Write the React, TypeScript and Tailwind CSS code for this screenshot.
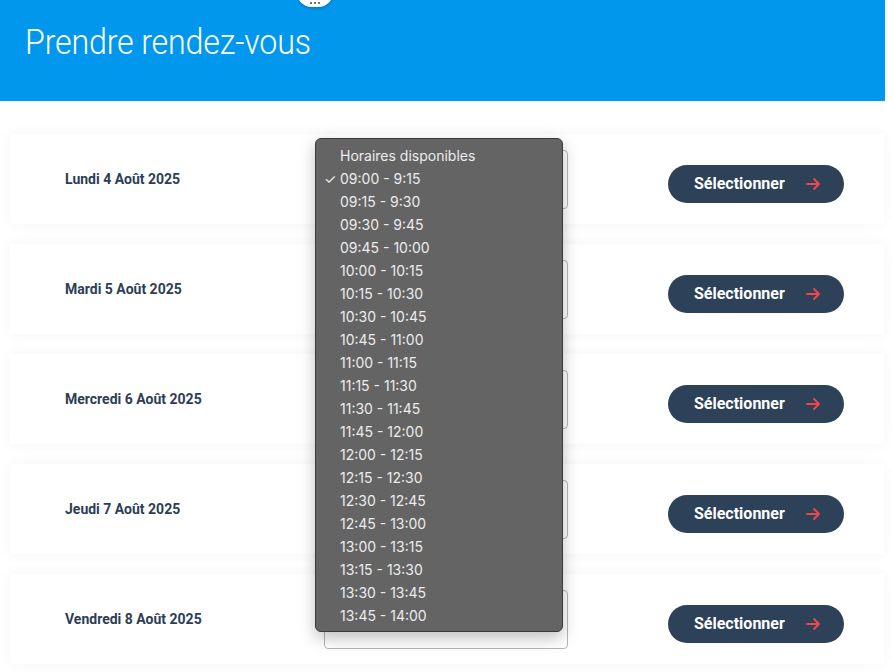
import React from 'react';

const dates = [
    'Lundi 4 Août 2025',
    'Mardi 5 Août 2025',
    'Mercredi 6 Août 2025',
    'Jeudi 7 Août 2025',
    'Vendredi 8 Août 2025',
];

const slots = [
    '09:00 - 9:15', '09:15 - 9:30', '09:30 - 9:45', '09:45 - 10:00',
    '10:00 - 10:15', '10:15 - 10:30', '10:30 - 10:45', '10:45 - 11:00',
    '11:00 - 11:15', '11:15 - 11:30', '11:30 - 11:45', '11:45 - 12:00',
    '12:00 - 12:15', '12:15 - 12:30', '12:30 - 12:45', '12:45 - 13:00',
    '13:00 - 13:15', '13:15 - 13:30', '13:30 - 13:45', '13:45 - 14:00',
];

const Arrow: React.FC = () => (
    <svg width="16" height="16" viewBox="0 0 16 16" fill="none" stroke="#f0474f" strokeWidth="1.8" strokeLinecap="round" strokeLinejoin="round">
        <path d="M2 8h12M9 3l5 5-5 5" />
    </svg>
);

export default function App() {
    return (
        <div className="relative w-[893px] h-[672px] bg-white overflow-hidden font-['Roboto',sans-serif]">
            <header className="relative h-[101px] w-[885px] bg-[#0097ec] pl-[25px] pt-[19px]">
                {/* little floating pill, cut at the top edge */}
                <div className="absolute left-[297px] top-[-22px] w-[36px] h-[29px] rounded-full bg-white shadow-[0_1px_3px_rgba(0,0,0,0.25)] flex items-end justify-center gap-[2px] pb-[3px]">
                    <span className="w-[2px] h-[2px] rounded-full bg-[#444]" />
                    <span className="w-[2px] h-[2px] rounded-full bg-[#444]" />
                    <span className="w-[2px] h-[2px] rounded-full bg-[#444]" />
                </div>
                <h1 className="inline-block origin-left scale-x-[0.92] text-white text-[35px] font-light leading-[48px] tracking-[-0.2px] whitespace-nowrap">Prendre rendez-vous</h1>
            </header>

            <div className="flex flex-col gap-[20px] pt-[33px] px-[10px]">
                {dates.map((d) => (
                    <div key={d} className="w-[874px] h-[90px] bg-white shadow-[0_0_14px_rgba(0,0,0,0.045)] flex items-center">
                        <div className="w-[314px] pl-[55px] text-[14px] font-bold text-[#2c3e55]">{d}</div>
                        <div className="w-[244px] h-[59px] border border-[#b5b5b5] rounded-[4px] bg-white" />
                        <button className="ml-[100px] mt-[10px] w-[176px] h-[38px] rounded-full bg-[#2d4259] text-white font-bold text-[16px] flex items-center pl-[26px] gap-[20px]">
                            <span>Sélectionner</span>
                            <Arrow />
                        </button>
                    </div>
                ))}
            </div>

            <div className="absolute left-[315px] top-[138px] w-[248px] h-[494px] bg-[#646464] border border-[#3a3a3a] rounded-[6px] shadow-[0_6px_16px_rgba(0,0,0,0.25)] pt-[5px] font-['Inter',sans-serif] text-[14px] text-[#ececec]">
                <div className="h-[23px] leading-[23px] pl-[24px]">Horaires disponibles</div>
                {slots.map((s, i) => (
                    <div key={s} className="relative h-[23px] leading-[23px] pl-[24px]">
                        {i === 0 && <span className="absolute left-[8px] top-0">✓</span>}
                        {s}
                    </div>
                ))}
            </div>
        </div>
    );
}
